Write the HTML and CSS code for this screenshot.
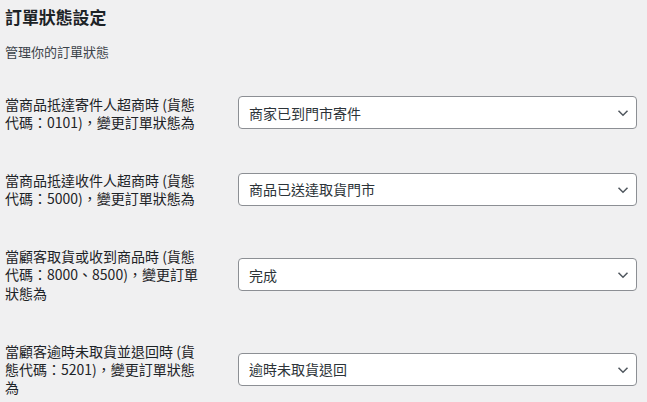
FILE: index.html
```html
<!DOCTYPE html>
<html lang="zh-Hant">
<head>
  <meta charset="utf-8">
  <title>訂單狀態設定</title>
  <link rel="stylesheet" href="styles.css">
</head>
<body>
  <div class="wrap">
    <h2 class="page-title">訂單狀態設定</h2>
    <p class="page-desc">管理你的訂單狀態</p>

    <form class="form-table">
      <div class="form-row">
        <label class="row-label" for="st-0101">當商品抵達寄件人超商時 (貨態代碼：0101)，變更訂單狀態為</label>
        <div class="select-box">
          <select id="st-0101" class="status-select">
            <option>商家已到門市寄件</option>
          </select>
          <svg class="chevron" width="12" height="8" viewBox="0 0 12 8"><path d="M1.5 1.8l4.5 4.5 4.5-4.5" fill="none" stroke="#50575e" stroke-width="1.5"/></svg>
        </div>
      </div>

      <div class="form-row">
        <label class="row-label" for="st-5000">當商品抵達收件人超商時 (貨態代碼：5000)，變更訂單狀態為</label>
        <div class="select-box">
          <select id="st-5000" class="status-select">
            <option>商品已送達取貨門市</option>
          </select>
          <svg class="chevron" width="12" height="8" viewBox="0 0 12 8"><path d="M1.5 1.8l4.5 4.5 4.5-4.5" fill="none" stroke="#50575e" stroke-width="1.5"/></svg>
        </div>
      </div>

      <div class="form-row">
        <label class="row-label" for="st-8000">當顧客取貨或收到商品時 (貨態代碼：8000、8500)，變更訂單狀態為</label>
        <div class="select-box">
          <select id="st-8000" class="status-select">
            <option>完成</option>
          </select>
          <svg class="chevron" width="12" height="8" viewBox="0 0 12 8"><path d="M1.5 1.8l4.5 4.5 4.5-4.5" fill="none" stroke="#50575e" stroke-width="1.5"/></svg>
        </div>
      </div>

      <div class="form-row">
        <label class="row-label" for="st-5201">當顧客逾時未取貨並退回時 (貨態代碼：5201)，變更訂單狀態為</label>
        <div class="select-box">
          <select id="st-5201" class="status-select">
            <option>逾時未取貨退回</option>
          </select>
          <svg class="chevron" width="12" height="8" viewBox="0 0 12 8"><path d="M1.5 1.8l4.5 4.5 4.5-4.5" fill="none" stroke="#50575e" stroke-width="1.5"/></svg>
        </div>
      </div>
    </form>
  </div>
</body>
</html>
```

FILE: styles.css
```css
body {
  font-family: "Noto Sans CJK TC", sans-serif;
  background-color: #f0f0f1;
  color: #1d2327;
  font-size: 14px;
  margin: 0;
  padding: 0;
}

.wrap {
  padding: 6px 10px 0 5px;
}

.page-title {
  font-size: 16.9px;
  font-weight: 600;
  line-height: 22px;
  margin: 0;
  color: #1d2327;
}

.page-desc {
  font-size: 13px;
  line-height: 1.5;
  margin: 14px 0 13px;
  color: #3c434a;
}

.form-row {
  display: grid;
  grid-template-columns: 233px 1fr;
}

.row-label {
  width: 195px;
  padding: 20px 0;
  line-height: 1.3;
  font-weight: 400;
}

.select-box {
  position: relative;
  align-self: center;
}

.status-select {
  appearance: none;
  -webkit-appearance: none;
  display: block;
  width: 100%;
  height: 33px;
  padding: 0 30px 0 10px;
  border: 1px solid #8c8f94;
  border-radius: 4px;
  background-color: #fff;
  color: #2c3338;
  font-family: inherit;
  font-size: 14px;
}

.chevron {
  position: absolute;
  right: 8px;
  top: 13px;
}
```
